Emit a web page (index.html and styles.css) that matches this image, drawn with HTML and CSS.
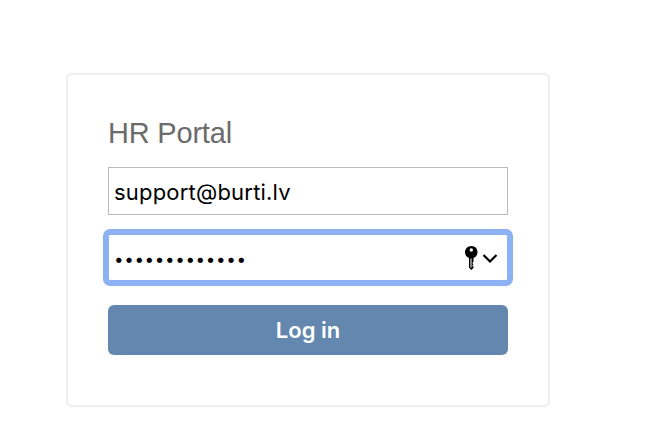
FILE: index.html
```html
<!DOCTYPE html>
<html lang="en">
<head>
    <meta charset="UTF-8">
    <meta name="viewport" content="width=device-width, initial-scale=1.0">
    <title>HR Portal</title>
    <link rel="stylesheet" href="styles.css">
</head>
<body>
    <div class="card">
        <h2>HR Portal</h2>
        <input class="field field-email" type="text" value="support@burti.lv">
        <div class="field-wrap">
            <input class="field field-focus" type="password" value="aaaaaaaaaaaaa">
            <div class="key-menu">
                <svg width="15" height="26" viewBox="0 0 15 26">
                    <path d="M7.5 1C3.8 1 1 3.800 1 7.300c0 2.700 1.600 4.800 4 5.700v9.500L7.300 25l2.200-2v-1.500L8.300 20.500l1.200-1.200-1.200-1.200 1.200-1.200V13c2.400-.9 4-3 4-5.700C13.500 3.800 11.200 1 7.500 1z" fill="#000"/>
                    <circle cx="7.300" cy="5" r="1.700" fill="#fff"/>
                    <rect x="6.500" y="13.500" width="1" height="9" fill="#fff"/>
                </svg>
                <svg width="16" height="10" viewBox="0 0 16 10">
                    <path d="M1.500 2L8 8.500 14.500 2" fill="none" stroke="#000" stroke-width="2.200"/>
                </svg>
            </div>
        </div>
        <button class="login">Log in</button>
    </div>
</body>
</html>
```

FILE: styles.css
```css
body {
    margin: 0;
    padding: 73px 0 0 66px;
    background-color: #ffffff;
    font-family: 'Liberation Sans', sans-serif;
}

.card {
    box-sizing: border-box;
    width: 484px;
    height: 334px;
    padding: 41px 40px 0;
    background-color: #ffffff;
    border: 2px solid #eeeeee;
    border-radius: 6px;
}

h2 {
    margin: 0 0 17px;
    font-size: 29px;
    line-height: 34px;
    font-weight: 400;
    letter-spacing: -0.2px;
    color: #6b6b6b;
}

.field {
    display: block;
    box-sizing: border-box;
    width: 400px;
    height: 48px;
    padding: 0 5px;
    border: 1px solid #bbbbbb;
    border-radius: 0;
    background-color: #ffffff;
    font-family: 'Inter', sans-serif;
    font-size: 22px;
    color: #000000;
}

.field-email {
    padding-top: 2px;
    letter-spacing: 0.2px;
}

.field-wrap {
    position: relative;
    margin-top: 19px;
}

.field-focus {
    height: 47px;
    padding-top: 2px;
    outline: 6px solid #8cb2f4;
    outline-offset: -1px;
    border-radius: 2px;
    letter-spacing: 0.640px;
    font-size: 17px;
}

.key-menu {
    position: absolute;
    top: 11px;
    right: 10px;
    display: flex;
    align-items: center;
    gap: 3px;
}

.login {
    display: block;
    width: 400px;
    height: 50px;
    margin-top: 24px;
    border: none;
    border-radius: 6px;
    background-color: #6387ae;
    color: #ffffff;
    font-family: 'Inter', sans-serif;
    font-size: 22px;
    font-weight: 600;
}
```
